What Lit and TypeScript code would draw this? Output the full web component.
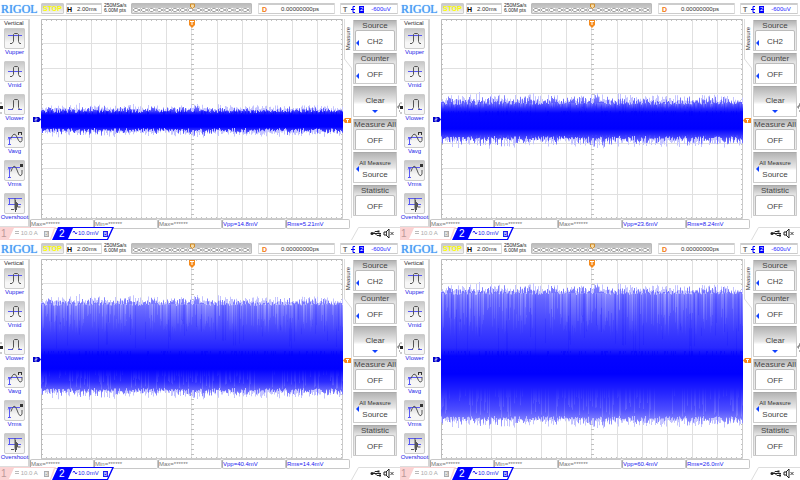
import { LitElement, html, svg, css } from "lit";
import { customElement, property } from "lit/decorators.js";

/** Persistence trace: outer envelope plus colour stops from top to bottom. */
interface Trace {
  top: number;
  bottom: number;
  spike: number;
  streak: number;
  stops: [number, string][];
}

interface Reading {
  id: string;
  vpp: string;
  rms: string;
  trace: Trace;
}

const READINGS: Reading[] = [
  {
    id: "a",
    vpp: "14.8mV",
    rms: "5.21mV",
    trace: {
      top: 109,
      bottom: 132,
      spike: 5,
      streak: 3,
      stops: [
        [105, "#8c8cff"],
        [110, "#5050ff"],
        [115, "#0000ff"],
        [127, "#0000ff"],
        [132, "#5050ff"],
        [136, "#8c8cff"],
      ],
    },
  },
  {
    id: "b",
    vpp: "23.6mV",
    rms: "8.24mV",
    trace: {
      top: 101,
      bottom: 140,
      spike: 8,
      streak: 8,
      stops: [
        [96, "#8c8cff"],
        [102, "#6464ff"],
        [108, "#3030ff"],
        [113, "#0404ff"],
        [129, "#0000ff"],
        [137, "#3c3cff"],
        [145, "#8c8cff"],
      ],
    },
  },
  {
    id: "c",
    vpp: "40.4mV",
    rms: "14.4mV",
    trace: {
      top: 62,
      bottom: 152,
      spike: 7,
      streak: 32,
      stops: [
        [57, "#8c8cff"],
        [70, "#6868ff"],
        [94, "#3c3cff"],
        [108, "#2424ff"],
        [115, "#0404ff"],
        [129, "#0000ff"],
        [142, "#2c2cff"],
        [150, "#6464ff"],
        [157, "#9c9cff"],
      ],
    },
  },
  {
    id: "d",
    vpp: "60.4mV",
    rms: "26.0mV",
    trace: {
      top: 51,
      bottom: 180,
      spike: 8,
      streak: 46,
      stops: [
        [44, "#8c8cff"],
        [60, "#6464ff"],
        [90, "#3c3cff"],
        [108, "#2828ff"],
        [116, "#0404ff"],
        [134, "#0000ff"],
        [154, "#2828ff"],
        [170, "#4e4eff"],
        [180, "#8080ff"],
        [187, "#a4a4ff"],
      ],
    },
  },
];

function randomFrom(seed: number): () => number {
  let state = seed;
  return () => {
    state = (state * 1664525 + 1013904223) % 4294967296;
    return state / 4294967296;
  };
}

const LEFT = 41;
const RIGHT = 343;
const CENTRE = 120;

/** Jagged outline whose spikes point away from the centre line. */
function envelope(top: number, bottom: number, spike: number, seed: number): string {
  const next = randomFrom(seed);
  const upper: string[] = [];
  const lower: string[] = [];
  for (let x = LEFT; x < RIGHT; x += 1) {
    const up = top - Math.pow(next(), 3) * spike + next() * 3;
    const down = bottom + Math.pow(next(), 3) * spike - next() * 3;
    upper.push(`L${x} ${up.toFixed(1)}H${x + 1}`);
    lower.unshift(`L${x + 1} ${down.toFixed(1)}H${x}`);
  }
  return `M${LEFT} ${CENTRE}${upper.join("")}${lower.join("")}Z`;
}

/** Vertical hairlines at random columns, reaching inwards from one edge. */
function streaks(edge: number, reach: number, density: number, seed: number): string {
  const next = randomFrom(seed);
  let d = "";
  for (let x = LEFT; x < RIGHT; x += 1) {
    const length = reach * (0.3 + next() * 0.7);
    if (next() < density) d += `M${x} ${edge}h1v${length.toFixed(1)}h-1z`;
  }
  return d;
}

function repeatPath(from: number, to: number, step: number, draw: (v: number) => string): string {
  let d = "";
  for (let v = from; v <= to; v += step) d += draw(v);
  return d;
}

const GRID =
  repeatPath(66, 320, 25.1, (x) => `M${Math.round(x) + 0.5} 19V219`) +
  repeatPath(44, 200, 25.1, (y) => `M41 ${Math.round(y) - 0.5}H343`);
const TICKS =
  repeatPath(46.5, 342, 5, (x) => `M${x} 19v2M${x} 219v-2`) +
  repeatPath(24.5, 218, 5, (y) => `M41 ${y}h2M343 ${y}h-2M191 ${y}h3`);

const ICONS: Record<string, unknown> = {
  Vupper: svg`<path class="blue" d="M4 7.500h14"/><path class="ink" d="M6 15.500h2l1.500-2V6.500l1-1h3l1 1v7l1 2h1.500"/>`,
  Vmid: svg`<path class="blue" d="M4 10.500h14"/><path class="ink" d="M6 15.500h2l1.500-2V6.500l1-1h3l1 1v7l1 2h1.500"/>`,
  Vlower: svg`<path class="blue" d="M4 15.500h5M14 15.500h4"/><path class="ink" d="M8 15.500l1.500-2V6.500l1-1h3l1 1v7l1 2"/>`,
  Vavg: svg`<path class="blue" d="M4 10.500h14M5.500 17v-6M4 12.500l1.500-2 1.500 2M4 17.500h3"/><path class="ink" d="M7 11.500Q10 3.500 13 10q3 8 5 3.500V10"/><path class="dark" d="M14 5h4v3h-1V6h-2v2h-1z"/>`,
  Vrms: svg`<path class="blue" d="M4 7.500h12M5.500 17V8M4 9.500l1.500-2 1.500 2M4 17.500h3"/><path class="ink" d="M7 11.500Q10 1.500 13 10q3 9 5 4V10"/><path class="dark" d="M16 4h3v3h-3z"/>`,
  Overshoot: svg`<path class="blue" d="M4 5.500h14M4 11.500h13M5.500 6v5"/><path class="ink" d="M7 16.500h3l1-1V5M11.500 7v12M12.500 9v8M13.500 10v4h3"/>`,
};

const MEASUREMENTS = Object.keys(ICONS);

@customElement("scope-screen")
export class ScopeScreen extends LitElement {
  @property({ attribute: false }) reading: Reading = READINGS[0];

  static styles = css`
    :host {
      display: flex;
      flex-direction: column;
      position: relative;
      min-width: 0;
      overflow: hidden;
      background: #fff;
      color: #333;
      font: 6px/7px "Liberation Sans", Arial, sans-serif;
    }
    button {
      margin: 0;
      padding: 0;
      border: 0;
      background: none;
      color: inherit;
      font: inherit;
    }
    svg {
      display: block;
      overflow: visible;
    }

    /* Status bar */
    header {
      display: grid;
      grid-template-columns: 39px 23px 36px 25px 1fr 80px 58px;
      gap: 2px;
      height: 16px;
      padding: 3px 2px 0 0;
      box-sizing: border-box;
      border-bottom: 1px solid #d8d8d8;
      align-items: start;
    }
    .logo {
      padding-left: 1px;
      color: #4a9df5;
      font: 12px/13px "Liberation Serif", serif;
      text-shadow: 0 0 1px #4a9df5;
    }
    .stop,
    .box,
    .memory {
      height: 11px;
      box-sizing: border-box;
      border: 1px solid #ddd;
      border-radius: 1px;
    }
    .stop {
      border-color: #ccc;
      background: linear-gradient(#c8c8c8, #f4f4f4);
      color: #ff0;
      font-size: 7px;
      font-weight: bold;
      text-align: center;
      line-height: 9px;
    }
    .box {
      display: flex;
      align-items: center;
      border-top: 2px solid #ccc;
      border-bottom-color: #ccc;
    }
    .time b {
      width: 10px;
      color: #000;
      font-size: 7px;
    }
    .rate {
      color: #222;
      font-size: 5px;
      line-height: 5px;
      white-space: nowrap;
    }
    .memory {
      margin-right: 4px;
      padding: 0 1px;
      border-color: #bbb;
      background: linear-gradient(#bbb, #ddd);
    }
    .memory svg {
      width: 100%;
      height: 9px;
    }
    .delay {
      margin-right: 3px;
    }
    .delay b {
      width: 22px;
      padding-left: 3px;
      box-sizing: border-box;
      color: #f27a12;
      font-size: 7px;
    }
    .trigger {
      gap: 4px;
      padding-left: 2px;
      color: #1a1aff;
    }
    .trigger b {
      color: #666;
      font-size: 7px;
    }
    .trigger i {
      width: 5px;
      background: #00f;
      color: #fff;
      font-style: normal;
      text-align: center;
      margin-right: 3px;
    }

    /* Work area */
    main {
      display: grid;
      grid-template-columns: 30px 11px 1fr 10px 47px;
      grid-template-rows: 200px 8px;
      grid-template-areas: "side mark plot tab menu" "side meas meas meas menu";
      padding-top: 3px;
    }
    .side {
      grid-area: side;
      display: flex;
      flex-direction: column;
      width: 30px;
      box-sizing: border-box;
      border-top: 1px solid #ddd;
      border-right: 2px solid #d4d4d4;
      border-bottom: 1px solid #ddd;
    }
    .side h2 {
      margin: 0;
      height: 8px;
      padding-left: 4px;
      color: #333;
      font: inherit;
      line-height: 7px;
    }
    .side button {
      display: flex;
      flex-direction: column;
      align-items: center;
      height: 33px;
      padding-left: 1px;
      color: #2222e8;
      white-space: nowrap;
    }
    .side svg {
      width: 21px;
      height: 21px;
      flex: none;
      background: linear-gradient(#c4c4c4, #f6f6f6 70%);
      outline: 1px solid #ccc;
      outline-offset: -1px;
      border-radius: 2px;
    }
    .ink,
    .blue {
      fill: none;
      stroke: #555;
    }
    .blue {
      stroke: #5858f4;
    }
    .dark {
      fill: #333;
    }
    .mark {
      grid-area: mark;
      padding: 97px 0 0 3px;
    }
    .plot {
      grid-area: plot;
      position: relative;
      min-width: 0;
    }
    .plot > svg {
      width: 100%;
      height: 200px;
    }
    .plot .position {
      position: absolute;
      top: 0;
      left: 50%;
      width: 6px;
      margin-left: -3px;
      height: 9px;
    }
    .tab {
      grid-area: tab;
      position: relative;
      color: #333;
    }
    .tab svg {
      width: 10px;
      height: 200px;
    }
    .tab span {
      position: absolute;
      top: 8px;
      left: 2px;
      writing-mode: vertical-rl;
      transform: rotate(180deg);
    }
    .menu {
      grid-area: menu;
      display: flex;
      flex-direction: column;
      gap: 2px;
      padding: 1px 3px 0 0;
      color: #444;
      font-size: 8px;
    }
    .menu button {
      position: relative;
      display: flex;
      flex-direction: column;
      align-items: center;
      height: 31px;
      padding: 0 1px 1px;
      box-sizing: border-box;
      border: 1px solid #ccc;
      border-top-color: #aaa;
      border-radius: 1px;
      background: linear-gradient(#b4b4b4, #e2e2e2 28%, #eee);
      line-height: 9px;
      white-space: nowrap;
      overflow: hidden;
    }
    .menu .value {
      align-self: stretch;
      flex: 1;
      border: 1px solid #bbb;
      border-radius: 2px;
      background: #fff;
      line-height: 21px;
    }
    .menu .plain {
      background: linear-gradient(#b4b4b4, #e8e8e8 50%, #fff 60%);
    }
    .menu .clear {
      padding-top: 9px;
    }
    .menu .clear svg {
      width: 6px;
      height: 3px;
      margin-top: 5px;
    }
    .menu .all {
      padding-top: 5px;
      line-height: 13px;
    }
    .menu small {
      font-size: 6px;
      line-height: 10px;
      color: #333;
    }
    .menu .arrow {
      position: absolute;
      left: 2px;
      top: 19px;
      width: 3px;
      height: 6px;
    }
    .menu .all .arrow {
      top: 13px;
    }
    .results {
      grid-area: meas;
      display: grid;
      grid-template-columns: repeat(5, 1fr);
      margin: 0 3px 0 0;
    }
    .results div {
      border: 1px solid #c8c8c8;
      border-left-color: #aaa;
      border-radius: 2px;
      box-sizing: border-box;
      color: #777;
      white-space: nowrap;
      line-height: 8px;
    }
    .results .live {
      color: #1a1af0;
    }

    /* Channel bar */
    footer {
      display: flex;
      height: 13px;
      box-sizing: border-box;
    }
    .channel {
      position: relative;
      display: flex;
      align-items: center;
      height: 13px;
      width: 52px;
      color: #aaa;
    }
    .channel svg {
      position: absolute;
      left: 0;
      top: 0;
    }
    .channel b,
    .channel span,
    .channel i {
      position: relative;
    }
    .channel b {
      width: 14px;
      font-size: 10px;
      font-weight: normal;
      color: #b99;
      text-align: left;
      padding-left: 1px;
      box-sizing: border-box;
    }
    .channel span {
      width: 30px;
      text-align: left;
    }
    .channel i {
      width: 5px;
      height: 6px;
      background: #aaa;
      color: #fff;
      font: 5px/6px "Liberation Sans", sans-serif;
    }
    .two {
      width: 62px;
      color: #1a1af0;
    }
    .two b {
      width: 21px;
      padding-left: 7px;
      color: #fff;
    }
    .two i {
      background: #1a1af0;
    }
    .status {
      width: 49px;
      height: 13px;
      margin-left: auto;
    }
    .handle {
      position: absolute;
      top: 102px;
      left: 0;
      width: 3px;
      height: 12px;
    }
    .handle.end {
      left: auto;
      right: 0;
      width: 2px;
    }
  `;

  private arrow() {
    return html`<svg class="arrow" viewBox="0 0 3 6"><path d="M3 0v6L0 3z" fill="#1040ff" /></svg>`;
  }

  private option(title: string, value: string, arrow = false) {
    return html`<button type="button">
      ${title}<span class="value">${value}</span>${arrow ? this.arrow() : ""}
    </button>`;
  }

  private trace() {
    const { id, trace } = this.reading;
    const { top, bottom, spike, streak, stops } = trace;
    const first = stops[0][0];
    const last = stops[stops.length - 1][0];
    const fill = `url(#tone-${id})`;
    const fadeDown = `url(#fade-down-${id})`;
    const fadeUp = `url(#fade-up-${id})`;
    const lowerReach = streak * 0.7;
    return svg`
      <defs>
        <linearGradient id="tone-${id}" gradientUnits="userSpaceOnUse" x1="0" x2="0" y1=${first} y2=${last}>
          ${stops.map(([y, color]) => svg`<stop offset=${(y - first) / (last - first)} stop-color=${color} />`)}
        </linearGradient>
        <linearGradient id="fade-down-${id}" gradientUnits="userSpaceOnUse" x1="0" x2="0" y1=${top} y2=${top + streak}>
          <stop offset="0" stop-color="#fff" stop-opacity=".2" />
          <stop offset="1" stop-color="#fff" stop-opacity="0" />
        </linearGradient>
        <linearGradient id="fade-up-${id}" gradientUnits="userSpaceOnUse" x1="0" x2="0" y1=${bottom} y2=${bottom - lowerReach}>
          <stop offset="0" stop-color="#fff" stop-opacity=".2" />
          <stop offset="1" stop-color="#fff" stop-opacity="0" />
        </linearGradient>
      </defs>
      <path d=${envelope(top - 1, bottom + 1, spike, 977)} fill="#c4c4ff" />
      <path d=${envelope(top + 1, bottom - 1, spike, 8191)} fill=${fill} />
      <path d=${streaks(top + 2, streak, 0.35, 311)} fill=${fadeDown} />
      <path d=${streaks(top + 2, streak, 0.35, 5471)} fill=${fadeDown} />
      <path d=${streaks(bottom - 2 - lowerReach, lowerReach, 0.4, 6173)} fill=${fadeUp} />
      <path d=${streaks(top + 3, streak * 1.4, 0.2, 4242)} fill="#00f" fill-opacity=".14" />
      <path d=${streaks(111, 5, 0.3, 733)} fill="#00f" fill-opacity=".5" />
    `;
  }

  render() {
    const { vpp, rms } = this.reading;
    const chain = repeatPath(0, 112, 8, (x) => `M${x} 6l2-1.500h2l4 3M${x} 6l2 1.500h2l4-3`);
    return html`
      <header>
        <div class="logo">RIGOL</div>
        <button class="stop" type="button">STOP</button>
        <div class="box time"><b>H</b>2.00ms</div>
        <div class="rate">250MSa/s<br />6.00M pts</div>
        <div class="memory">
          <svg viewBox="0 0 120 9" preserveAspectRatio="none">
            <path d="M0 4h120v4H0z" fill="#fff" />
            <path d=${chain} fill="none" stroke="#888" stroke-width=".8" />
            <path d="M59 0h4v3l-2 1.500-2-1.500z" fill="#f6dca8" stroke="#d08820" />
          </svg>
        </div>
        <div class="box delay"><b>D</b>0.00000000ps</div>
        <div class="box trigger">
          <b>T</b>
          <svg width="4" height="7" viewBox="0 0 4 7">
            <path d="M4 .5H2v6h2M0 3.500h4" fill="none" stroke="#00f" />
          </svg>
          <i>2</i>-600uV
        </div>
      </header>
      <main>
        <nav class="side">
          <h2>Vertical</h2>
          ${MEASUREMENTS.map(
            (name) => html`<button type="button">
              <svg viewBox="0 0 21 21">${ICONS[name]}</svg>${name}
            </button>`
          )}
        </nav>
        <div class="mark">
          <svg width="8" height="7" viewBox="0 0 8 7">
            <path d="M0 1h6l2 2.500L6 6H0z" fill="#00c" />
            <path d="M2 2h2v1.500H2V5h2" fill="none" stroke="#fff" stroke-width=".6" />
          </svg>
        </div>
        <div class="plot">
          <svg viewBox="41 19 302 200" preserveAspectRatio="none">
            <path d=${GRID} stroke="#e0e0e0" />
            <path d=${TICKS} stroke="#c0c0c0" />
            <path d="M41.500 219V19.500H343" stroke="#bbb" fill="none" />
            <path d="M342.500 19V218.500H41" stroke="#ccc" fill="none" />
            ${this.trace()}
          </svg>
          <svg class="position" viewBox="0 0 6 9">
            <path d="M0 1h6v5L3 9 0 6z" fill="#f58a1c" />
            <path d="M1 2.500h4M3 2.500V6" stroke="#fff" />
          </svg>
        </div>
        <div class="tab">
          <svg viewBox="0 0 10 200">
            <path d="M1.500 0v40l7 9v150" fill="none" stroke="#ddd" />
            <path d="M0 101.500l2-2.500h6v5H2z" fill="#f58a1c" />
            <path d="M3 100.500h3M4.500 100.500v3" stroke="#fff" />
          </svg>
          <span>Measure</span>
        </div>
        <nav class="menu">
          ${this.option("Source", "CH2", true)} ${this.option("Counter", "OFF", true)}
          <button class="plain clear" type="button">
            Clear<svg viewBox="0 0 6 3"><path d="M0 0h6L3 3z" fill="#1040ff" /></svg>
          </button>
          ${this.option("Measure All", "OFF")}
          <button class="plain all" type="button"><small>All Measure</small>Source${this.arrow()}</button>
          ${this.option("Statistic", "OFF")}
        </nav>
        <div class="results">
          <div>Max=******</div>
          <div>Min=******</div>
          <div>Max=******</div>
          <div class="live">Vpp=${vpp}</div>
          <div class="live">Rms=${rms}</div>
        </div>
      </main>
      <footer>
        <button class="channel" type="button">
          <svg width="56" height="13" viewBox="0 0 56 13">
            <path d="M0 0h56l-5 13H0z" fill="#fbd3d3" />
            <path d="M14 1h40l-4 11H9z" fill="#fff" />
            <path d="M15 4.500h4M15 6.500h4" stroke="#bbb" />
          </svg>
          <b>1</b><span>&nbsp;&nbsp;&nbsp;&nbsp;10.0 A</span><i>B</i>
        </button>
        <button class="channel two" type="button">
          <svg width="62" height="13" viewBox="0 0 62 13">
            <path d="M6 0h56l-6 13H0z" fill="#00f" />
            <path d="M21 1h39l-5 11H16z" fill="#fff" />
            <path d="M21 5.500q1-3 2 0t2 0" fill="none" stroke="#1a1af0" />
          </svg>
          <b>2</b><span>&nbsp;&nbsp;&nbsp;10.0mV</span><i>B</i>
        </button>
        <svg class="status" viewBox="0 0 49 13">
          <path d="M.500 13L7.500.500H49" fill="none" stroke="#ddd" />
          <path d="M20 6.500h10M22 6.500l2-2h3M24 6.500l2 2h3" fill="none" stroke="#222" />
          <circle cx="21" cy="6.500" r="1.500" fill="#222" />
          <path d="M26.500 3.500h2v2h-2zM28 7.500h2v2h-2z" fill="#222" />
          <path d="M33 5h2l3-3v9l-3-3h-2z" fill="#fff" stroke="#222" />
          <path d="M35.500 5v3M39.500 5l3 3M42.500 5l-3 3" stroke="#444" />
        </svg>
      </footer>
      <svg class="handle" viewBox="0 0 3 12">
        <path d="M0 1h2M0 11h2" stroke="#999" /><path d="M0 4h3v3H0z" fill="#222" />
      </svg>
      <svg class="handle end" viewBox="0 0 2 12">
        <path d="M1 2h1v2H0v2h1M1 9h1" stroke="#666" fill="none" />
      </svg>
    `;
  }
}

@customElement("app-root")
export class AppRoot extends LitElement {
  static styles = css`
    :host {
      display: grid;
      grid-template-columns: repeat(2, minmax(0, 1fr));
      background: #fff;
    }
  `;

  render() {
    return READINGS.map((reading) => html`<scope-screen .reading=${reading}></scope-screen>`);
  }
}
